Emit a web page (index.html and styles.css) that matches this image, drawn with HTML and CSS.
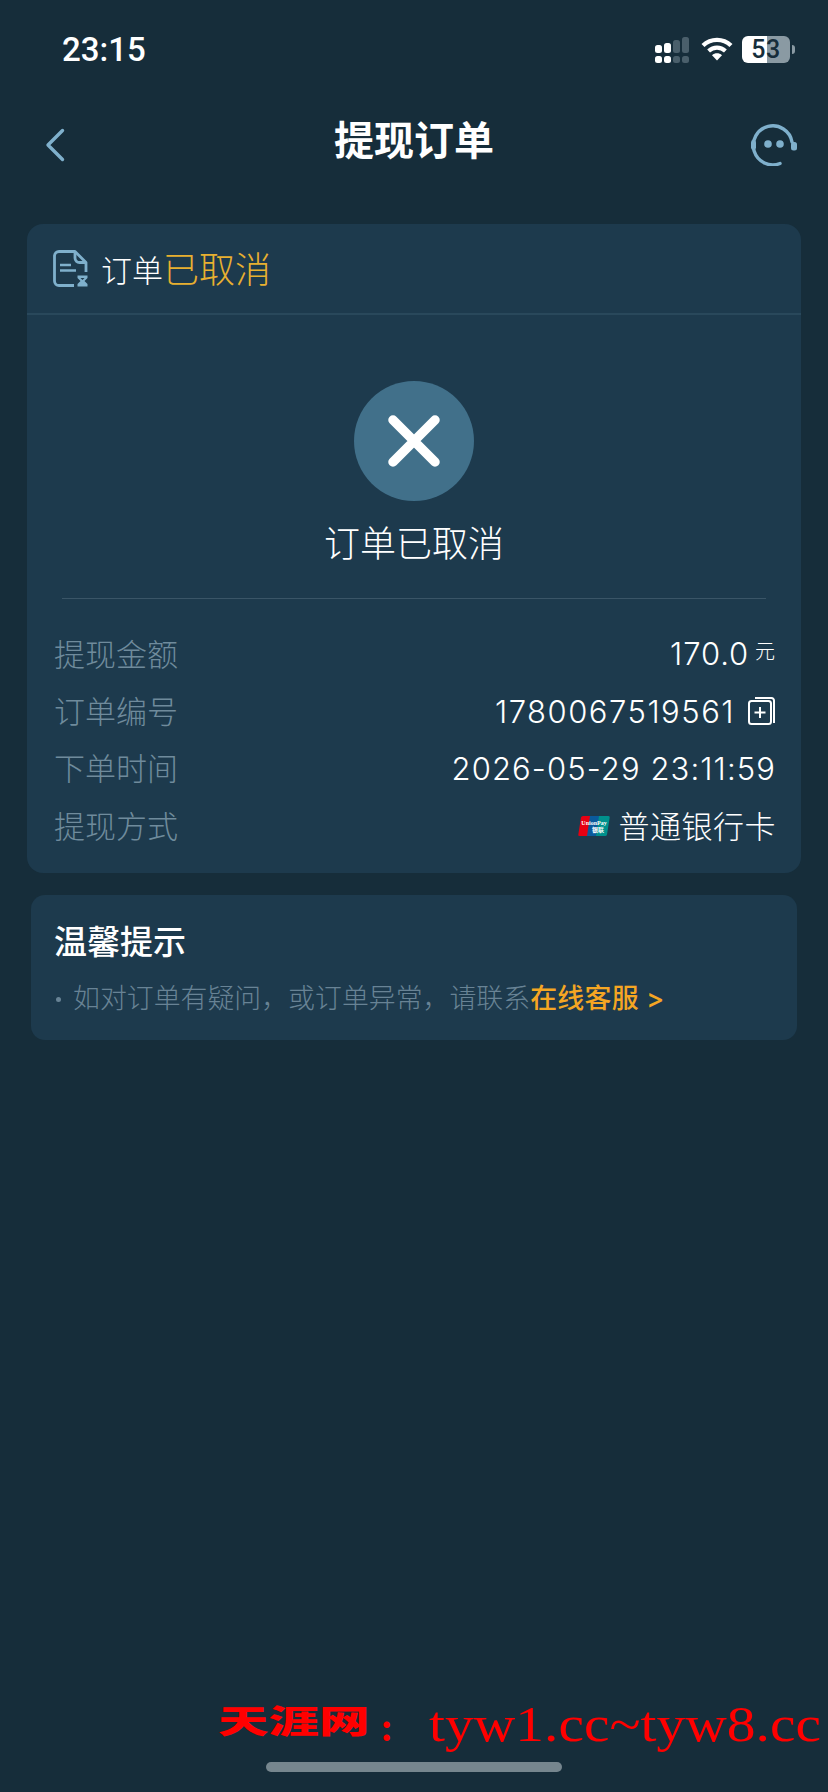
FILE: index.html
```html
<!DOCTYPE html>
<html lang="zh-CN">
<head>
    <meta charset="UTF-8" />
    <meta name="viewport" content="width=device-width, initial-scale=1.0"/>
    <title>提现订单</title>
    <link rel="stylesheet" href="styles.css">
</head>
<body>

<div class="screen">
    <div class="status-bar">
        <div class="status-time">23:15</div>
        <div class="status-icons">
            <svg class="signal-icon" width="34" height="27" viewBox="0 0 34 27">
                <rect x="0" y="9" width="7" height="8" rx="2.5" fill="#fff"/>
                <rect x="9" y="7" width="7" height="10" rx="2.5" fill="#fff"/>
                <rect x="18" y="4" width="7" height="13" rx="2.5" fill="#4a5f6b"/>
                <rect x="27" y="1" width="7" height="16" rx="2.5" fill="#4a5f6b"/>
                <rect x="0" y="20" width="7" height="7" rx="2.5" fill="#fff"/>
                <rect x="9" y="20" width="7" height="7" rx="2.5" fill="#fff"/>
                <rect x="18" y="20" width="7" height="7" rx="2.5" fill="#4a5f6b"/>
                <rect x="27" y="20" width="7" height="7" rx="2.5" fill="#4a5f6b"/>
            </svg>
            <svg class="wifi-icon" width="32" height="24" viewBox="0 0 32 24">
                <path d="M2 8.5C10 1 22 1 30 8.5" fill="none" stroke="#fff" stroke-width="4.4"/>
                <path d="M7.6 14C12.5 9.6 19.5 9.6 24.4 14" fill="none" stroke="#fff" stroke-width="4.2"/>
                <path d="M11 18.2C14 15.6 18 15.6 21 18.2L16 23.6Z" fill="#fff"/>
            </svg>
            <div class="battery"><span class="battery-num">53</span></div>
            <div class="battery-nub"></div>
        </div>
    </div>

    <div class="nav-bar">
        <svg class="back-icon" width="20" height="34" viewBox="0 0 20 34">
            <path d="M17.5 2.5L3 17L17.5 31.5" fill="none" stroke="#7fb0cc" stroke-width="3.4" stroke-linecap="round" stroke-linejoin="round"/>
        </svg>
        <h1 class="nav-title">提现订单</h1>
        <svg class="support-icon" width="46" height="42" viewBox="0 0 46 42">
            <path d="M41 18A19.500 19.500 0 1 0 29 39.500" fill="none" stroke="#7fb0cc" stroke-width="3.400" stroke-linecap="round"/>
            <rect x="0" y="16" width="5" height="10" rx="2.400" fill="#7fb0cc"/>
            <rect x="40" y="18" width="6" height="8.500" rx="2.500" fill="#7fb0cc"/>
            <circle cx="17" cy="20" r="3.800" fill="#7fb0cc"/>
            <circle cx="29" cy="20" r="3.800" fill="#7fb0cc"/>
        </svg>
    </div>

    <div class="order-card">
        <div class="card-header">
            <svg class="order-icon" width="36" height="38" viewBox="0 0 36 38">
                <path d="M21 35.500H6A4.500 4.500 0 0 1 1.500 31V6A4.500 4.500 0 0 1 6 1.500H22L33 12.500V22" fill="none" stroke="#7fb0cc" stroke-width="2.800" stroke-linejoin="round"/>
                <path d="M22 1.500V8A4.500 4.500 0 0 0 26.500 12.500H33" fill="none" stroke="#7fb0cc" stroke-width="2.800"/>
                <path d="M7 15H18M7 20.500H23" stroke="#7fb0cc" stroke-width="2.600"/>
                <path d="M24.500 25.500H34.500V28L31.500 31L34.500 34V36.500H24.500V34L27.500 31L24.500 28Z" fill="#7fb0cc"/>
                <path d="M27.500 28H31.500L29.500 30Z" fill="#1d3a4d"/>
            </svg>
            <span class="header-text">订单</span><span class="header-state">已取消</span>
        </div>

        <div class="result">
            <div class="result-circle">
                <svg width="52" height="52" viewBox="0 0 52 52">
                    <path d="M5 5L47 47M47 5L5 47" stroke="#fff" stroke-width="9.500" stroke-linecap="round"/>
                </svg>
            </div>
            <div class="result-text">订单已取消</div>
        </div>

        <div class="rows">
            <div class="row">
                <div class="row-label">提现金额</div>
                <div class="row-value amount">170.0<span class="unit">元</span></div>
            </div>
            <div class="row">
                <div class="row-label">订单编号</div>
                <div class="row-value order-no">1780067519561
                    <svg class="copy-icon" width="27" height="28" viewBox="0 0 27 28">
                        <rect x="1" y="4" width="22" height="23" rx="2.500" fill="none" stroke="#fff" stroke-width="2"/>
                        <path d="M7 1H23.500A2.500 2.500 0 0 1 26 3.500V26" fill="none" stroke="#fff" stroke-width="2"/>
                        <path d="M12 10V21M6.500 15.500H17.500" stroke="#fff" stroke-width="2"/>
                    </svg>
                </div>
            </div>
            <div class="row">
                <div class="row-label">下单时间</div>
                <div class="row-value">2026-05-29 23:11:59</div>
            </div>
            <div class="row">
                <div class="row-label">提现方式</div>
                <div class="row-value">
                    <svg class="unionpay-icon" width="32" height="20" viewBox="0 0 32 20">
                        <path d="M5 0H14L11 20H1.500Q0 20 0.300 18.500L3 1.500Q3.300 0 5 0Z" fill="#e60012"/>
                        <path d="M12 0H23L20 20H9Z" fill="#0a5a9c"/>
                        <path d="M21 0H30.500Q32 0 31.700 1.500L29 18.500Q28.700 20 27 20H18Z" fill="#00908c"/>
                        <text x="16" y="9" class="unionpay-text">UnionPay</text>
                        <text x="20" y="16" class="unionpay-text">银联</text>
                    </svg>
                    <span class="bank-name">普通银行卡</span>
                </div>
            </div>
        </div>
    </div>

    <div class="tip-card">
        <div class="tip-title">温馨提示</div>
        <div class="tip-line">
            <span class="tip-dot"></span>如对订单有疑问，或订单异常，请联系<span class="tip-link">在线客服 &gt;</span>
        </div>
    </div>

    <div class="watermark">
        <span class="watermark-cn">天涯网</span>
        <span class="watermark-colon">:</span>
        <span class="watermark-url">tyw1.cc~tyw8.cc</span>
    </div>
    <div class="home-bar"></div>
</div>

</body>
</html>
```

FILE: styles.css
```css
body {
    font-family: "Inter", "Noto Sans CJK SC", sans-serif;
    margin: 0;
    padding: 0;
    background: #162d3a;
}

.screen {
    position: relative;
    width: 828px;
    height: 1792px;
    overflow: hidden;
    background: #162d3a;
}

.status-bar {
    display: flex;
    justify-content: space-between;
    align-items: center;
    height: 98px;
    padding: 0 33px 0 62px;
    box-sizing: border-box;
}

.status-time {
    color: #fff;
    font-size: 33px;
    font-weight: 500;
    font-family: "Roboto", sans-serif;
}

.status-icons {
    display: flex;
    align-items: center;
}

.signal-icon {
    margin-right: 12px;
}

.wifi-icon {
    margin-right: 9px;
}

.battery {
    width: 48px;
    height: 27px;
    border-radius: 6px;
    background: linear-gradient(to right, #fff 52%, #8a9aa3 52%);
    display: flex;
    align-items: center;
    justify-content: center;
}

.battery-num {
    color: #162d3a;
    font-family: "Roboto", sans-serif;
    font-size: 25px;
    font-weight: 500;
    letter-spacing: 0.5px;
}

.battery-nub {
    width: 3px;
    height: 9px;
    margin-left: 2px;
    border-radius: 0 4px 4px 0;
    background: #8a9aa3;
}

.nav-bar {
    display: grid;
    grid-template-columns: 1fr auto 1fr;
    align-items: center;
    height: 86px;
    padding: 0 31px;
}

.nav-title {
    margin: 0 0 6px;
    color: #fff;
    font-size: 40px;
    font-weight: 700;
}

.support-icon {
    margin-top: 8px;
    justify-self: end;
}

.back-icon {
    margin: 8px 0 0 14px;
}

.order-card {
    margin: 40px 27px 0;
    height: 649px;
    background: #1d3a4d;
    border-radius: 16px;
}

.card-header {
    display: flex;
    align-items: center;
    height: 91px;
    padding-left: 26px;
    border-bottom: 2px solid #29485b;
    box-sizing: border-box;
}

.order-icon {
    margin-right: 12px;
}

.header-text {
    color: #fff;
    font-size: 31px;
    font-weight: 300;
}

.header-state {
    color: #e8b030;
    font-size: 36px;
    font-weight: 300;
    padding-bottom: 3px;
}

.result {
    margin: 0 35px;
    padding-top: 66px;
    height: 217px;
    border-bottom: 1px solid #3a5567;
    display: flex;
    flex-direction: column;
    align-items: center;
}

.result-circle {
    width: 120px;
    height: 120px;
    border-radius: 50%;
    background: #41708a;
    display: flex;
    align-items: center;
    justify-content: center;
    flex-shrink: 0;
}

.result-text {
    margin-top: 21px;
    color: #fff;
    font-size: 36px;
    font-weight: 300;
    line-height: 44px;
}

.rows {
    margin-top: 26px;
    padding: 0 25px 0 27px;
}

.row {
    display: flex;
    justify-content: space-between;
    align-items: center;
    height: 57.400px;
}

.row-label {
    color: #6f8b9c;
    font-size: 31px;
    font-weight: 300;
    padding-bottom: 3px;
}

.row-value {
    display: flex;
    align-items: center;
    color: #fff;
    font-size: 31px;
    font-weight: 300;
    letter-spacing: 1.1px;
}

.amount {
    letter-spacing: 0.9px;
}

.order-no {
    letter-spacing: 1.500px;
}

.unit {
    font-size: 20px;
    margin-left: 6px;
    margin-bottom: 6px;
}

.copy-icon {
    margin-left: 13px;
    margin-right: 1px;
}

.unionpay-icon {
    margin-right: 9px;
}

.unionpay-text {
    fill: #fff;
    font-size: 6px;
    font-weight: 700;
    text-anchor: middle;
    letter-spacing: 0;
    font-family: "Liberation Serif", serif;
}

.bank-name {
    padding-bottom: 3px;
    font-size: 31px;
    letter-spacing: 0.5px;
}

.tip-card {
    margin: 22px 31px 0;
    height: 145px;
    padding: 25px 23px 0;
    box-sizing: border-box;
    background: #1d3a4d;
    border-radius: 14px;
}

.tip-title {
    color: #fff;
    font-size: 33px;
    font-weight: 500;
    line-height: 44px;
}

.tip-line {
    display: flex;
    align-items: center;
    margin-top: 14px;
    color: #688395;
    font-size: 26.900px;
    font-weight: 300;
    line-height: 40px;
}

.tip-dot {
    width: 5px;
    height: 5px;
    border-radius: 50%;
    background: #688395;
    margin: 2px 12px 0 2px;
}

.tip-link {
    color: #f5a623;
    font-weight: 500;
    letter-spacing: 0.3px;
}

.watermark {
    position: absolute;
    left: 218px;
    top: 1695px;
    white-space: nowrap;
    color: #ff0000;
    display: flex;
    align-items: baseline;
    height: 70px;
}

.watermark-cn {
    display: inline-block;
    width: 152px;
    font-size: 32px;
    font-weight: 900;
    font-family: "Noto Sans CJK SC", sans-serif;
    transform-origin: left;
    transform: translateY(-8px) scaleX(1.580);
}

.watermark-colon {
    margin-left: 10px;
    font-family: "Liberation Serif", serif;
    font-size: 40px;
    font-weight: 700;
}

.watermark-url {
    display: inline-block;
    margin-left: 36px;
    font-family: "Liberation Serif", serif;
    font-size: 50px;
    transform-origin: left;
    transform: scaleX(1.150);
}

.home-bar {
    position: absolute;
    left: 266px;
    bottom: 20px;
    width: 296px;
    height: 10px;
    border-radius: 5px;
    background: #76868e;
}
```
